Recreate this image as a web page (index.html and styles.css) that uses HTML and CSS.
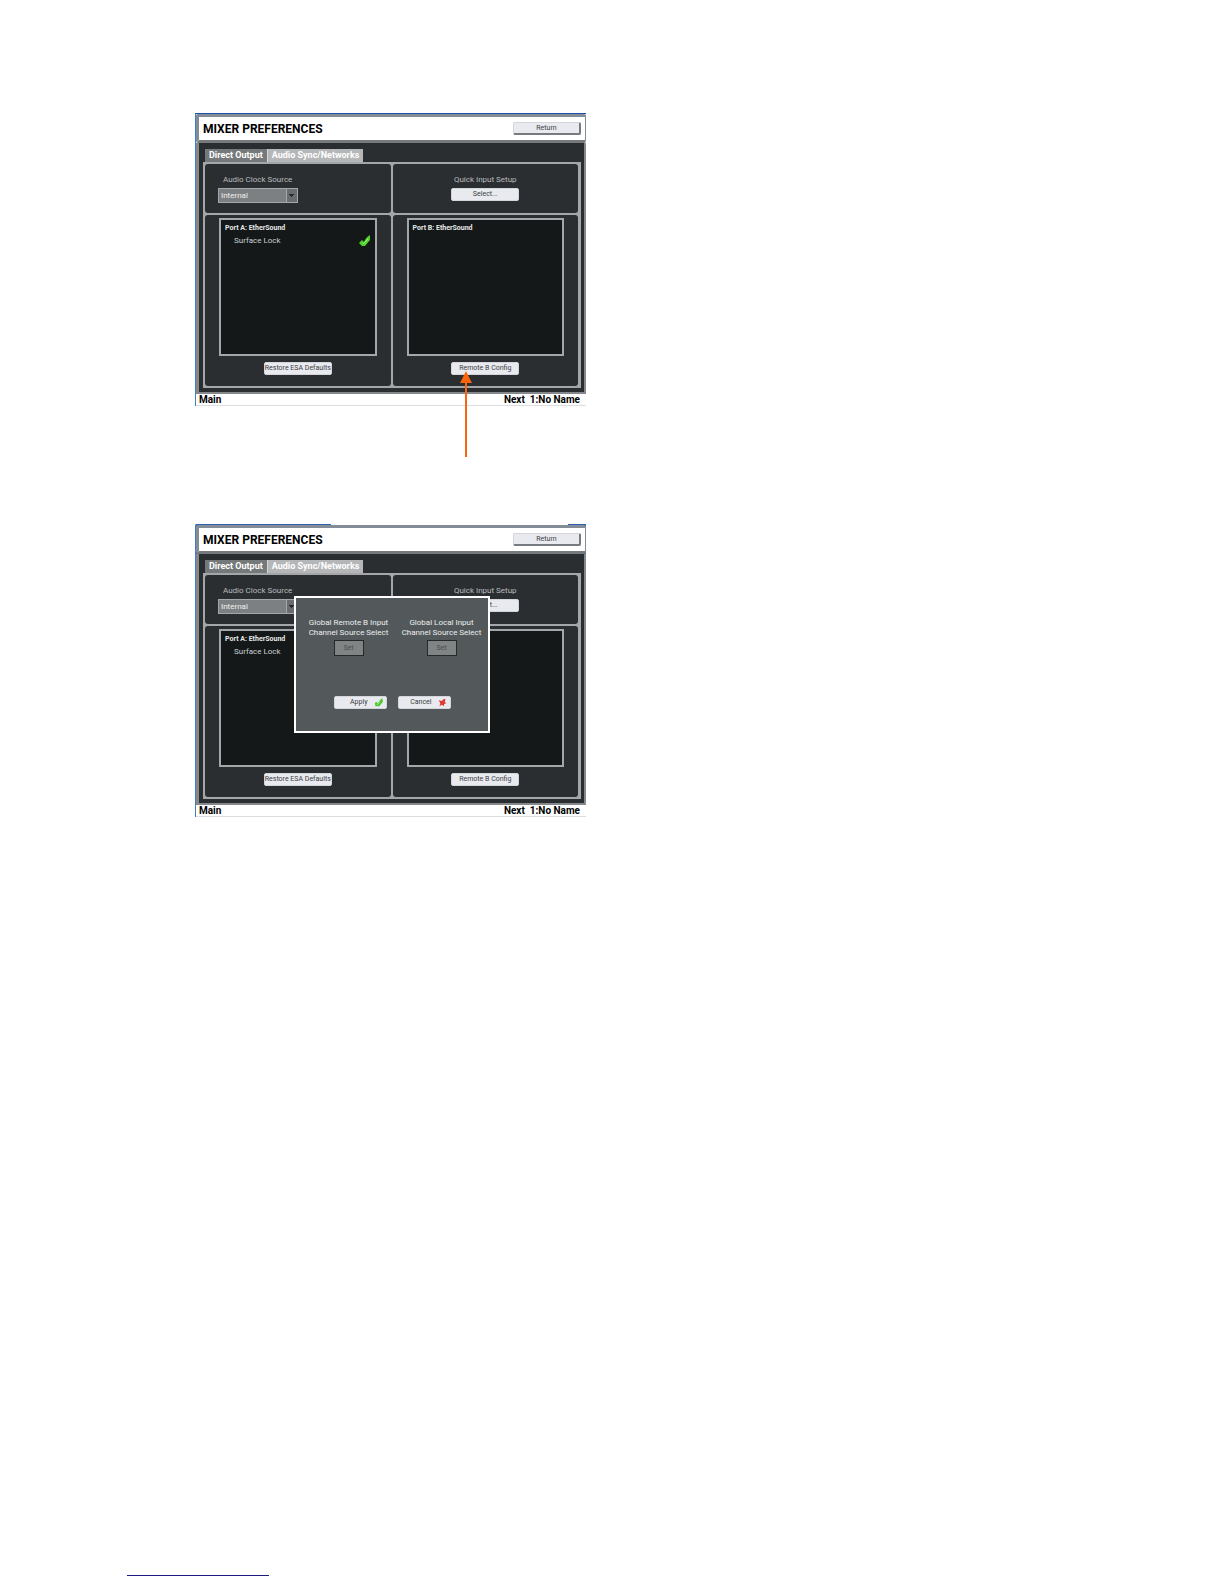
FILE: index.html
```html
<!DOCTYPE html>
<html lang="en">
<head>
<meta charset="utf-8">
<title>Mixer Preferences</title>
<link rel="stylesheet" href="styles.css">
</head>
<body>
<main class="page">
  <figure class="figure">
    <section class="screen">
      <header class="titlebar">
        <h1 class="title">MIXER PREFERENCES</h1>
        <button class="btn btn-return" type="button">Return</button>
      </header>
      <div class="body">
        <nav class="tabs">
          <button class="tab" type="button">Direct Output</button>
          <button class="tab tab-active" type="button">Audio Sync/Networks</button>
        </nav>
        <div class="panel">
          <div class="cell cell-clock">
            <label class="label" for="clock1">Audio Clock Source</label>
            <select class="select" id="clock1"><option>Internal</option></select>
          </div>
          <div class="cell cell-quick">
            <span class="label">Quick Input Setup</span>
            <button class="btn" type="button">Select...</button>
          </div>
          <div class="cell cell-port">
            <div class="port">
              <h2 class="port-name">Port A: EtherSound</h2>
              <p class="port-row">Surface Lock
                <svg class="check" viewBox="0 0 12 12"><path d="M0 8 3 5 5 7Q7 2 11 0L11 5 6 11 3 11Z" fill="#4fd42a"/><path d="M4 9 9 4" stroke="#a6f58a"/></svg>
              </p>
            </div>
            <button class="btn" type="button">Restore ESA Defaults</button>
          </div>
          <div class="cell cell-port">
            <div class="port">
              <h2 class="port-name">Port B: EtherSound</h2>
            </div>
            <button class="btn" type="button">Remote B Config</button>
          </div>
        </div>
      </div>
      <footer class="status"><span>Main</span><span>Next&nbsp; 1:No Name</span></footer>
    </section>
    <svg class="arrow" viewBox="0 0 12 86"><path d="M6 0 12 12H7V86H5V12H0Z" fill="#f9640c"/></svg>
  </figure>

  <figure class="figure">
    <section class="screen screen-open">
      <header class="titlebar">
        <h1 class="title">MIXER PREFERENCES</h1>
        <button class="btn btn-return" type="button">Return</button>
      </header>
      <div class="body">
        <nav class="tabs">
          <button class="tab" type="button">Direct Output</button>
          <button class="tab tab-active" type="button">Audio Sync/Networks</button>
        </nav>
        <div class="panel">
          <div class="cell cell-clock">
            <label class="label" for="clock2">Audio Clock Source</label>
            <select class="select" id="clock2"><option>Internal</option></select>
          </div>
          <div class="cell cell-quick">
            <span class="label">Quick Input Setup</span>
            <button class="btn" type="button">Select...</button>
          </div>
          <div class="cell cell-port">
            <div class="port">
              <h2 class="port-name">Port A: EtherSound</h2>
              <p class="port-row">Surface Lock</p>
            </div>
            <button class="btn" type="button">Restore ESA Defaults</button>
          </div>
          <div class="cell cell-port">
            <div class="port"></div>
            <button class="btn" type="button">Remote B Config</button>
          </div>
        </div>
      </div>
      <footer class="status"><span>Main</span><span>Next&nbsp; 1:No Name</span></footer>
      <div class="dialog" role="dialog">
        <div class="sources">
          <div class="source">
            <span>Global Remote B Input<br>Channel Source Select</span>
            <button class="set" type="button">Set</button>
          </div>
          <div class="source">
            <span>Global Local Input<br>Channel Source Select</span>
            <button class="set" type="button">Set</button>
          </div>
        </div>
        <div class="actions">
          <button class="btn btn-action" type="button">Apply
            <svg class="mark" viewBox="0 0 12 12"><path d="M1 7 3 5 5 7Q7 3 11 0L12 5 7 11 2 11Z" fill="#4fc92d"/><path d="M4 9 8 5" stroke="#c4f5b4"/></svg>
          </button>
          <button class="btn btn-action" type="button">Cancel
            <svg class="mark" viewBox="0 0 12 12"><path d="M1 3 5 4 8 1 10 2 9 5 11 7 8 8 8 11 5 9 2 11 3 7Z" fill="#e03a30"/></svg>
          </button>
        </div>
      </div>
    </section>
  </figure>
  <hr class="rule">
</main>
</body>
</html>
```

FILE: styles.css
```css
* { box-sizing: border-box; }

body {
  margin: 0;
  background: #fff;
  color: #000;
  font: 8px/10px Roboto, "Liberation Sans", sans-serif;
}

h1, h2, p, figure { margin: 0; }

button, select { font: inherit; padding: 0; }

.page {
  display: flex;
  flex-direction: column;
  gap: 118px;
  min-height: 100vh;
  padding: 113px 127px 8px;
}

.figure {
  position: relative;
  width: 100%;
  max-width: 391px;
  margin-left: 68px;
}

.screen {
  position: relative;
  border-left: 1px solid #3f7fc4;
  border-top: 1px solid #1b52a8;
}

.screen-open {
  border-top-color: transparent;
  background: linear-gradient(90deg, #2c62ae 136px, #fff 136px, #fff calc(100% - 18px), #2c62ae calc(100% - 18px)) border-box;
}

.titlebar {
  display: flex;
  align-items: center;
  justify-content: space-between;
  height: 29px;
  padding: 0 4px;
  border: solid #848c98;
  border-width: 3px 1px 3px 3px;
  border-bottom-color: #777a7c;
  border-radius: 2px;
  background: #fff;
}

.title {
  font-size: 12px;
  line-height: 20px;
}

.body {
  padding: 6px 3px 4px 4px;
  border: solid #85898c;
  border-width: 0 2px 2px 3px;
  background: #2a2e30;
}

.tabs { display: flex; padding-left: 2px; }

.tab {
  height: 13px;
  padding: 0 4px;
  border: 0;
  background: #76797a;
  color: #fff;
  font-size: 9px;
  font-weight: bold;
  line-height: 13px;
}

.tab-active {
  border-left: 1px solid #d4d6d7;
  background: #b4b6b7;
}

.panel {
  display: grid;
  grid-template-columns: 1fr 1fr;
  grid-template-rows: 49px auto;
  gap: 2px;
  padding: 2px 3px 2px 2px;
  background: #a3a7a9;
}

.cell {
  display: flex;
  flex-direction: column;
  align-items: center;
  border-radius: 3px;
  background: #2a2e30;
}

.cell-clock { align-items: flex-start; padding: 11px 13px 0; }
.cell-quick { padding-top: 11px; }
.cell-port { gap: 6px; padding: 3px 14px 11px; }

.label {
  margin-bottom: 3px;
  color: #b9bcbd;
}

.cell-clock .label { padding-left: 5px; }

.select {
  width: 80px;
  height: 15px;
  padding-left: 2px;
  border: 1px solid #a4a7a8;
  border-radius: 0;
  appearance: none;
  background:
    linear-gradient(#25282a, #25282a) right 3px top 5px / 5px 1px no-repeat,
    linear-gradient(#25282a, #25282a) right 4px top 6px / 3px 1px no-repeat,
    linear-gradient(#25282a, #25282a) right 5px top 7px / 1px 1px no-repeat,
    linear-gradient(90deg, #7d8082 67px, #a4a7a8 67px, #a4a7a8 68px, #696d6f 68px);
  color: #f0f0f0;
  line-height: 13px;
}

.btn {
  width: 68px;
  height: 13px;
  border: 1px solid #d4d6dc;
  border-radius: 2px;
  background: #e8eaf0;
  color: #3c3f42;
  font-size: 7px;
  line-height: 11px;
  white-space: nowrap;
}

.btn-return {
  border-right: 2px solid #777b80;
  border-bottom: 2px solid #777b80;
}

.port {
  width: 100%;
  height: 138px;
  padding: 3px 4px;
  border: 2px solid #a3a7a9;
  background: #141819;
  color: #e6e8e8;
}

.port-name { font-size: 7px; line-height: 10px; }

.port-row {
  display: flex;
  align-items: center;
  justify-content: space-between;
  height: 15px;
  padding-left: 9px;
  color: #cccfd0;
}

.check { width: 12px; height: 12px; }

.status {
  display: flex;
  justify-content: space-between;
  height: 12px;
  padding: 0 6px 0 3px;
  border-bottom: 1px solid #dcdde0;
  background: #fff;
  font-size: 10px;
  font-weight: bold;
  line-height: 12px;
}

/* Pointer to the Remote B Config button */
.arrow {
  position: absolute;
  left: 265px;
  top: 258px;
  width: 12px;
  height: 86px;
}

.dialog {
  position: absolute;
  left: 98px;
  top: 71px;
  width: 196px;
  height: 137px;
  padding-top: 20px;
  border: 2px solid #fff;
  background: #53595b;
  color: #eceeee;
}

.sources {
  display: grid;
  grid-template-columns: 1fr 1fr;
  gap: 2px;
  margin-bottom: 40px;
  padding: 0 1px 0 7px;
}

.source {
  display: flex;
  flex-direction: column;
  align-items: center;
  gap: 2px;
  text-align: center;
  white-space: nowrap;
}

.set {
  width: 30px;
  height: 16px;
  border: 1px solid #25292a;
  background: #808484;
  color: #4a4e4f;
  font-size: 7px;
}

.actions { display: flex; justify-content: center; gap: 11px; }

.btn-action {
  display: flex;
  align-items: center;
  justify-content: flex-end;
  gap: 6px;
  width: 53px;
  padding-right: 3px;
}

.mark { width: 9px; height: 9px; }

.rule {
  width: 142px;
  height: 1px;
  margin: auto 0 0;
  border: 0;
  background: #1c1c80;
}
```
